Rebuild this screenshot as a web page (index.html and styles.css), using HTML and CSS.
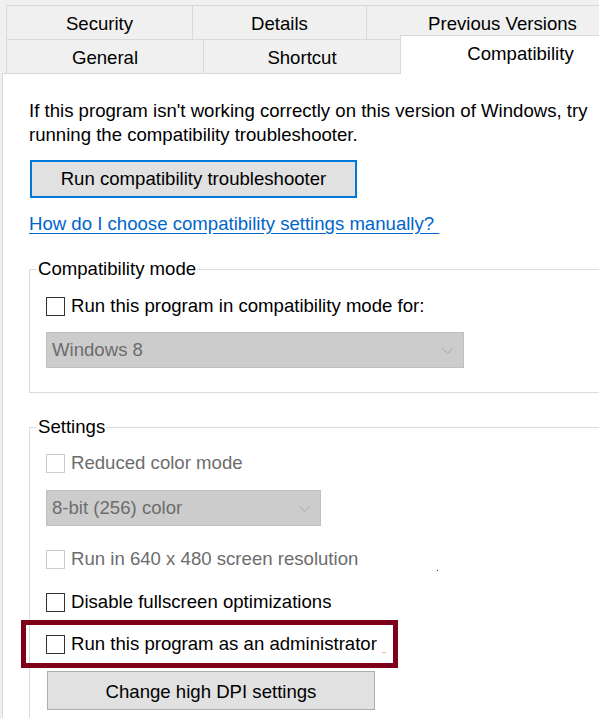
FILE: index.html
```html
<!DOCTYPE html>
<html lang="en">
<head>
<meta charset="utf-8">
<title>Properties - Compatibility</title>
<link rel="stylesheet" href="styles.css">
</head>
<body>
<div class="window">
  <div class="tabs">
    <div class="tabrow">
      <div class="tab w-security">Security</div>
      <div class="tab w-details">Details</div>
      <div class="tab w-previous">Previous Versions</div>
    </div>
    <div class="tabrow">
      <div class="tab w-general">General</div>
      <div class="tab w-shortcut">Shortcut</div>
      <div class="tab tab-active w-compat">Compatibility</div>
    </div>
  </div>
  <div class="panel">
    <p class="intro">If this program isn't working correctly on this version of Windows, try running the compatibility troubleshooter.</p>
    <button class="btn btn-primary">Run compatibility troubleshooter</button>
    <div class="linkrow"><a class="link" href="#">How do I choose compatibility settings manually? </a></div>

    <fieldset class="group group-compat">
      <legend>Compatibility mode</legend>
      <label class="check"><span class="box"></span><span>Run this program in compatibility mode for:</span></label>
      <div class="select select-wide"><span>Windows 8</span><svg class="chev" width="11" height="6" viewBox="0 0 11 6"><path d="M0.5 0.5 L5.5 5.5 L10.5 0.5" fill="none" stroke="#a6a6a6" stroke-width="1"/></svg></div>
    </fieldset>

    <fieldset class="group group-settings">
      <legend>Settings</legend>
      <label class="check disabled"><span class="box"></span><span>Reduced color mode</span></label>
      <div class="select select-narrow"><span>8-bit (256) color</span><svg class="chev" width="11" height="6" viewBox="0 0 11 6"><path d="M0.5 0.5 L5.5 5.5 L10.5 0.5" fill="none" stroke="#a6a6a6" stroke-width="1"/></svg></div>
      <label class="check disabled row-640"><span class="box"></span><span>Run in 640 x 480 screen resolution</span><span class="speck"></span></label>
      <label class="check row-fullscreen"><span class="box"></span><span>Disable fullscreen optimizations</span></label>
      <div class="highlight">
        <label class="check"><span class="box"></span><span>Run this program as an administrator</span><span class="mark"></span></label>
      </div>
      <button class="btn btn-dpi">Change high DPI settings</button>
    </fieldset>
  </div>
</div>
</body>
</html>
```
FILE: styles.css
```css
html, body {
  margin: 0;
  padding: 0;
  background: #f0f0f0;
  overflow: hidden;
}
body {
  width: 599px;
  height: 718px;
  font-family: "Liberation Sans", Arial, sans-serif;
  font-size: 18.6px;
  color: #000;
}
.window {
  width: 599px;
  height: 718px;
  overflow: hidden;
}
.tabs {
  padding: 5px 0 0 6px;
}
.tabrow {
  display: flex;
  height: 34px;
}
.tab {
  box-sizing: border-box;
  height: 34px;
  border-top: 1px solid #d9d9d9;
  border-left: 1px solid #d9d9d9;
  display: flex;
  align-items: center;
  justify-content: center;
  background: #f0f0f0;
  line-height: 1;
  flex: none;
  padding-top: 3px;
}
.w-security { width: 186px; }
.w-details { width: 174px; }
.w-previous { width: 272px; }
.w-general { width: 197px; }
.w-shortcut { width: 197px; }
.w-compat { width: 240px; }
.tab-active {
  background: #fff;
  height: 39px;
  margin-top: -4px;
  position: relative;
  z-index: 1;
  padding-top: 0;
  padding-bottom: 1px;
}
.panel {
  margin-left: 2px;
  border-top: 1px solid #d9d9d9;
  border-left: 1px solid #d9d9d9;
  background: #fff;
  padding: 25px 0 20px 26px;
  height: 700px;
}
.intro {
  margin: 0;
  width: 580px;
  line-height: 24px;
}
.btn {
  font-family: inherit;
  font-size: 18.6px;
  color: #000;
  background: #e1e1e1;
  box-sizing: border-box;
  display: block;
  padding: 0;
}
.btn-primary {
  margin: 13px 0 0 1px;
  width: 327px;
  height: 38px;
  border: 2px solid #0078d7;
}
.linkrow {
  margin-top: 14px;
  line-height: 24px;
}
.link {
  color: #0066cc;
  text-decoration: underline;
  text-underline-offset: 3px;
  white-space: pre;
}
.group {
  margin: 0;
  border: 1px solid #dcdcdc;
  width: 600px;
  box-sizing: border-box;
  padding: 0 0 0 16px;
}
.group legend {
  padding: 0 1px;
  margin-left: -9px;
  line-height: 24px;
}
.group-compat {
  margin-top: 21px;
  padding-top: 13px;
  padding-bottom: 24px;
}
.group-settings {
  margin-top: 22px;
  padding-top: 12px;
  border-bottom: none;
  padding-bottom: 40px;
}
.check {
  display: flex;
  align-items: center;
  line-height: 24px;
  height: 24px;
}
.box {
  box-sizing: border-box;
  width: 19px;
  height: 19px;
  border: 1px solid #333;
  background: #fff;
  margin-right: 6px;
  flex: none;
}
.check.disabled {
  color: #6d6d6d;
}
.check.disabled .box {
  border-color: #cccccc;
}
.select {
  box-sizing: border-box;
  height: 36px;
  background: #cccccc;
  border: 1px solid #bfbfbf;
  color: #6d6d6d;
  display: flex;
  align-items: center;
  justify-content: space-between;
  padding: 0 10px 0 5px;
}
.select-wide {
  width: 418px;
  margin-top: 14px;
}
.select-narrow {
  width: 275px;
  margin-top: 15px;
}
.chev {
  display: block;
  margin-top: 2px;
}
.row-640 {
  margin-top: 21px;
}
.speck {
  width: 1px;
  height: 1px;
  background: #c00000;
  margin-left: 79px;
  align-self: flex-end;
}
.row-fullscreen {
  margin-top: 19px;
}
.highlight {
  margin: 6px 0 0 -25px;
  width: 377px;
  box-sizing: border-box;
  border: 5px solid #7f0019;
  padding: 7px 0 7px 20px;
}
.mark {
  width: 4px;
  height: 1px;
  background: #f0b0b8;
  margin-left: 5px;
  align-self: flex-end;
  margin-bottom: 3px;
}
.btn-dpi {
  margin: 3px 0 0 1px;
  width: 328px;
  height: 39px;
  border: 1px solid #adadad;
  padding-top: 2px;
}
```
